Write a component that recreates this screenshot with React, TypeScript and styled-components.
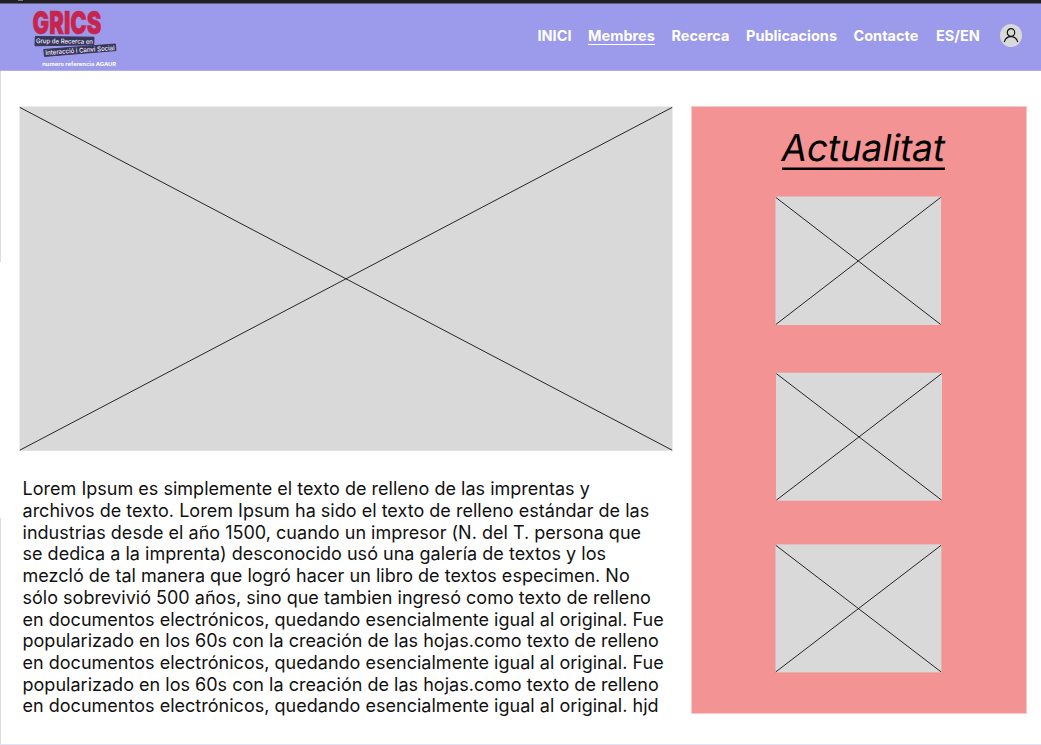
import React from "react";
import styled, { createGlobalStyle } from "styled-components";

const GlobalStyle = createGlobalStyle`
  *, *::before, *::after { box-sizing: border-box; }
  body { margin: 0; background: #fff; font-family: Inter, "Liberation Sans", sans-serif; }
`;

const Page = styled.div`
  width: 1041px;
  height: 745px;
  overflow: hidden;
  display: flex;
  flex-direction: column;
  background:
    linear-gradient(#dcdcdc, #dcdcdc) 0 0 / 1px 262px no-repeat,
    linear-gradient(#dcdcdc, #dcdcdc) 0 518px / 1px 227px no-repeat,
    #fff;
  border-bottom: 1px solid #e2e1f8;
`;

const TopEdge = styled.div`
  height: 4px;
  flex: none;
  background: #202022;
  border-bottom: 1px solid #615f83;
  padding-left: 18px;
`;

const Notch = styled.div`
  width: 5px;
  height: 1px;
  background: #777;
`;

const Header = styled.header`
  height: 67px;
  flex: none;
  display: flex;
  align-items: flex-start;
  justify-content: space-between;
  padding: 0 19px 0 30px;
  background: #9c9aea;
  border-bottom: 1px solid #b0aeee;
`;

const Logo = styled.svg`
  display: block;
  width: 90px;
  height: 66px;
  overflow: visible;
`;

const Nav = styled.nav`
  display: flex;
  align-items: center;
  height: 63px;
`;

const NavLink = styled.a<{ $width: number; $gap: number; $active?: boolean }>`
  width: ${(p) => p.$width}px;
  margin-right: ${(p) => p.$gap}px;
  font-size: 14.5px;
  line-height: 17px;
  font-weight: 700;
  color: #fff;
  white-space: nowrap;
  height: 17px;
  box-shadow: ${(p) => (p.$active ? "0 1px 0 #fff" : "none")};
`;

const Avatar = styled.svg`
  display: block;
  width: 22px;
  height: 23px;
`;

const Main = styled.main`
  display: flex;
  align-items: flex-start;
  gap: 18px;
  padding: 35px 0 0 19px;
`;

const Article = styled.article`
  width: 654px;
  flex: none;
`;

const Placeholder = styled.svg<{ $w: number; $h: number }>`
  display: block;
  flex: none;
  width: ${(p) => p.$w}px;
  height: ${(p) => p.$h}px;
`;

const Copy = styled.p`
  margin: 27.3px 0 0 3.5px;
  font-size: 18px;
  line-height: 21.7px;
  letter-spacing: 0.018px;
  color: #111;
`;

const Line = styled.span`
  display: block;
  width: max-content;
  white-space: nowrap;
`;

const Aside = styled.aside`
  width: 336px;
  height: 608px;
  flex: none;
  display: flex;
  flex-direction: column;
  align-items: flex-start;
  padding: 19px 0 0 83px;
  background: #f39393;
  border: 1px solid #f9c9c9;
`;

const Title = styled.h1`
  margin: 0 0 26px 7px;
  width: 163px;
  height: 44px;
  font-size: 37px;
  line-height: 43px;
  font-weight: 400;
  letter-spacing: -0.1px;
  white-space: nowrap;
  color: #000;
  box-shadow: 0 -2.5px 0 #000 inset;
`;

const Slanted = styled.span`
  display: inline-block;
  transform: skewX(-9.4deg);
`;

const Cards = styled.div`
  display: flex;
  flex-direction: column;
`;

const Card = styled.div<{ $space: number }>`
  margin-bottom: ${(p) => p.$space}px;
`;

const links = [
  { label: "INICI", width: 34, gap: 16.5 },
  { label: "Membres", width: 67, gap: 16.5, active: true },
  { label: "Recerca", width: 58, gap: 16.5 },
  { label: "Publicacions", width: 91, gap: 16.5 },
  { label: "Contacte", width: 66, gap: 16.5 },
  { label: "ES/EN", width: 44, gap: 20 },
];

const cards = [
  { w: 167, h: 129, left: 0.5, top: 0.5, right: 166, bottom: 129, space: 47 },
  { w: 167, h: 129, left: 1, top: 0.7, right: 167, bottom: 128.7, space: 43 },
  { w: 167, h: 129, left: 0.5, top: 0.4, right: 166.4, bottom: 128.4, space: 0 },
];

const lines = [
  "Lorem Ipsum es simplemente el texto de relleno de las imprentas y",
  "archivos de texto. Lorem Ipsum ha sido el texto de relleno estándar de las",
  "industrias desde el año 1500, cuando un impresor (N. del T. persona que",
  "se dedica a la imprenta) desconocido usó una galería de textos y los",
  "mezcló de tal manera que logró hacer un libro de textos especimen. No",
  "sólo sobrevivió 500 años, sino que tambien ingresó como texto de relleno",
  "en documentos electrónicos, quedando esencialmente igual al original. Fue",
  "popularizado en los 60s con la creación de las hojas.como texto de relleno",
  "en documentos electrónicos, quedando esencialmente igual al original. Fue",
  "popularizado en los 60s con la creación de las hojas.como texto de relleno",
  "en documentos electrónicos, quedando esencialmente igual al original. hjd",
];

type CrossBoxProps = { w: number; h: number; left: number; top: number; right: number; bottom: number };

function CrossBox({ w, h, left, top, right, bottom }: CrossBoxProps) {
  return (
    <Placeholder $w={w} $h={h} viewBox={`0 0 ${w} ${h}`}>
      <rect x={left} y={top} width={right - left} height={bottom - top} fill="#d9d9d9" />
      <path
        d={`M${left + 0.3} ${top + 0.9}L${right - 0.3} ${bottom - 0.5}M${right - 0.3} ${top + 0.9}L${left + 0.3} ${bottom - 0.5}`}
        stroke="#111"
        strokeWidth="0.9"
      />
    </Placeholder>
  );
}

function GricsLogo() {
  return (
    <Logo viewBox="30 4 90 66" fontFamily="Inter, sans-serif">
      <text x="32.5" y="33.8" fontSize="32" fontWeight="900" fill="#c7254e" stroke="#c7254e" strokeWidth="0.5" textLength="69" lengthAdjust="spacingAndGlyphs">GRICS</text>
      <path d="M35.3 36.5L94 37.2L93.7 44.8L35 45.8Z" fill="#37355a" stroke="#37355a" strokeLinejoin="round" />
      <path d="M43.8 49.5L115.3 44L116 50.6L44.5 56.4Z" fill="#37355a" stroke="#37355a" strokeLinejoin="round" />
      <text x="36" y="43.2" fontSize="6.6" fontWeight="500" fill="#f2f0ff" textLength="57" lengthAdjust="spacingAndGlyphs" transform="rotate(0.6 36 43)">Grup de Recerca en</text>
      <text x="45.5" y="55" fontSize="6.6" fontWeight="500" fill="#f2f0ff" textLength="69.5" lengthAdjust="spacingAndGlyphs" transform="rotate(-4 45.5 55)">Interacció i Canvi Social</text>
      <text x="42.2" y="65.6" fontSize="5" fontWeight="700" fill="#fff" textLength="74" lengthAdjust="spacingAndGlyphs">numero referencia AGAUR</text>
    </Logo>
  );
}

export default function App() {
  return (
    <>
      <GlobalStyle />
      <Page>
        <TopEdge><Notch /></TopEdge>
        <Header>
          <GricsLogo />
          <Nav>
            {links.map((l) => (
              <NavLink key={l.label} $width={l.width} $gap={l.gap} $active={l.active}>{l.label}</NavLink>
            ))}
            <Avatar viewBox="0 0 22 23">
              <ellipse cx="11" cy="11.5" rx="11" ry="11.5" fill="#d9d9d9" />
              <g fill="none" stroke="#111" strokeWidth="1.2" strokeLinecap="round">
                <ellipse cx="11" cy="8.5" rx="3.7" ry="3.9" />
                <path d="M4.4 17.6C5.4 14.4 7.8 12.6 11 12.6S16.6 14.4 17.6 17.6" />
              </g>
            </Avatar>
          </Nav>
        </Header>
        <Main>
          <Article>
            <CrossBox w={654} h={345} left={0.5} top={0.5} right={653.5} bottom={344.7} />
            <Copy>
              {lines.map((t, i) => (
                <Line key={i}>{t}</Line>
              ))}
            </Copy>
          </Article>
          <Aside>
            <Title><Slanted>Actualitat</Slanted></Title>
            <Cards>
              {cards.map(({ space, ...box }, i) => (
                <Card key={i} $space={space}><CrossBox {...box} /></Card>
              ))}
            </Cards>
          </Aside>
        </Main>
      </Page>
    </>
  );
}
